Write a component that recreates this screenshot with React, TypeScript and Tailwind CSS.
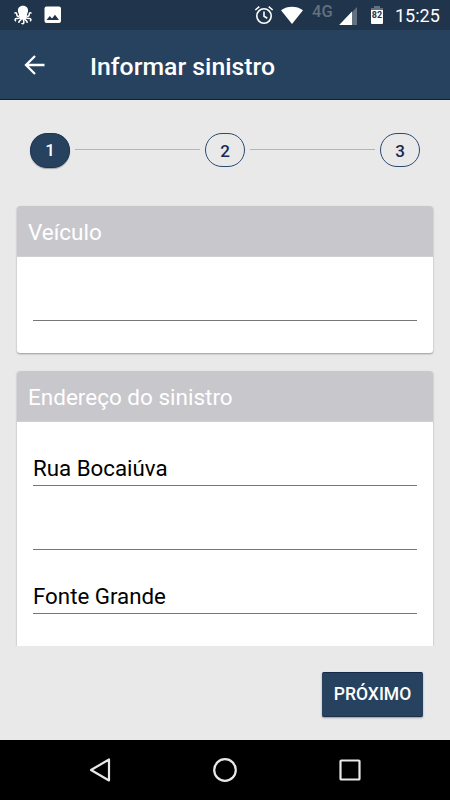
import { Fragment, type ReactNode } from 'react';
import clsx from 'clsx';

const steps = [1, 2, 3];
const currentStep = 1;

const address = [
  { id: 'street', value: 'Rua Bocaiúva' },
  { id: 'number', value: '' },
  { id: 'district', value: 'Fonte Grande' },
  { id: 'city', value: '' },
];

function StatusBar() {
  return (
    <div className="h-[30px] shrink-0 bg-[#20344c] text-white flex items-center pl-[14px] pr-[10px]">
      {/* Octopus notification */}
      <svg width="18" height="20" viewBox="0 0 18 20" className="shrink-0">
        <path
          d="M9 .8C5.500 .8 3.900 3.200 3.900 5.700C3.900 7.500 5 8.600 5.300 10.500L6 14H12L12.700 10.500C13 8.600 14.100 7.500 14.100 5.700C14.100 3.200 12.500 .8 9 .8Z"
          fill="currentColor"
        />
        <g fill="none" stroke="currentColor" strokeWidth="1.600" strokeLinecap="round">
          <path d="M6 10.500C4.500 12 2.800 11.500 2.800 9.500C2.800 8 1.800 7.300 1 8" />
          <path d="M12 10.500C13.500 12 15.200 11.500 15.200 9.500C15.200 8 16.200 7.300 17 8" />
          <path d="M6.800 12C5 14.200 3.500 13.300 2.200 13.500C1 13.700 .8 15 1.500 15.700" />
          <path d="M11.200 12C13 14.200 14.500 13.300 15.800 13.500C17 13.700 17.200 15 16.500 15.700" />
          <path d="M7.800 13C7.300 15.500 5 15.300 4.800 17.300" />
          <path d="M10.200 13C10.700 15.500 13 15.300 13.200 17.300" />
          <path d="M9 13C8.800 15 10.800 16.500 9.600 18.300C9.200 18.900 8.500 18.900 8 18.500" />
        </g>
      </svg>
      {/* Picture notification */}
      <svg width="18" height="18" viewBox="0 0 18 18" className="ml-[12px] shrink-0">
        <path
          fillRule="evenodd"
          d="M2.500 .5H15Q17 .5 17 2.500V15Q17 17 15 17H2.500Q.5 17 .5 15V2.500Q.5 .5 2.500 .5ZM2.500 14H15L11 8.800L8 12.500L5.800 10Z"
          fill="currentColor"
        />
      </svg>

      <div className="ml-auto flex items-center">
        <svg width="20" height="20" viewBox="0 0 20 20" fill="none" stroke="currentColor" strokeWidth="1.600">
          <circle cx="10" cy="11" r="7.200" />
          <path d="M10 6.500V11.300L13.300 13.300" />
          <path d="M1.300 5L5.300 1.600M18.700 5L14.700 1.600" />
        </svg>
        <svg width="24" height="20" viewBox="0 0 24 20" className="ml-[6px]">
          <path d="M1 5.200C7.500 .6 16.500 .6 23 5.200L12 19Z" fill="currentColor" />
        </svg>
        <span className="ml-[8px] w-[22px] font-medium text-[16.500px] leading-none text-[#62717f] relative -top-[3px]">4G</span>
        <svg width="19" height="18" viewBox="0 0 19 18" className="ml-[5px] mr-px relative top-px">
          <path d="M18 0V18H.5Z" fill="#62717f" />
          <path d="M13 4.500V18H.2Z" fill="currentColor" />
        </svg>
        <div className="ml-[12px] w-[12px] h-[18px]">
          <div className="mx-auto w-[6px] h-[2px] bg-[#62717f]" />
          <div className="h-[2px] bg-[#62717f]" />
          <div className="h-[14px] rounded-b-[1px] bg-white text-[#20344c] text-[9px] leading-[11px] font-bold text-center">82</div>
        </div>
        <span className="ml-[12px] w-[45px] pt-[2px] text-[18px] leading-none whitespace-nowrap">15:25</span>
      </div>
    </div>
  );
}

function Stepper() {
  return (
    <div className="h-[34px] mt-[33px] mx-[30px] flex shrink-0">
      {steps.map((step, i) => (
        <Fragment key={step}>
          {i > 0 && <div className="flex-1 h-px mt-[16px] mx-[5px] bg-[#b1b7b6]" />}
          <div
            className={clsx(
              'w-[40px] rounded-[17px] border flex items-center justify-center text-[17px] leading-none font-medium',
              step === currentStep
                ? 'h-[35px] bg-[#27425f] border-[#1c3554] text-white shadow-[0_1px_1px_rgba(0,0,0,0.3)]'
                : 'h-[34px] pt-[2px] border-[#2b4a70] text-[#172a50]'
            )}
          >
            {step}
          </div>
        </Fragment>
      ))}
    </div>
  );
}

function Card({ title, children }: { title: string; children: ReactNode }) {
  return (
    <section className="rounded-[3px] bg-white overflow-hidden shadow-[0_1px_2px_rgba(0,0,0,0.35)] shrink-0">
      <h2 className="h-[51px] pl-[11px] pt-[4px] flex items-center bg-[#c8c7cc] border-b border-[#d0cfd3] text-white text-[22.5px]">{title}</h2>
      <div className="px-4 pb-8">{children}</div>
    </section>
  );
}

function Field({ value }: { value: string }) {
  return (
    <div className="h-[64px] pb-[4px] flex items-end border-b border-[#777] text-[22.3px] leading-[26px] text-black">
      {value}
    </div>
  );
}

export default function App() {
  return (
    <div className="w-[450px] h-[800px] flex flex-col overflow-hidden bg-[#e9e9e9] font-[Roboto,sans-serif]">
      <StatusBar />

      <header className="h-[70px] shrink-0 bg-[#27425f] border-b border-[#10203c] text-white flex items-center">
        <svg width="22" height="20" viewBox="0 0 22 20" fill="none" stroke="currentColor" strokeWidth="2.300" className="ml-[24px]">
          <path d="M11 1L2 10L11 19M2 10H20.500" />
        </svg>
        <h1 className="ml-[44px] pt-[5px] text-[24.8px] leading-none font-medium">Informar sinistro</h1>
      </header>

      <Stepper />

      {/* Scrollable form */}
      <main className="mt-[34px] h-[445px] shrink-0 overflow-hidden px-[17px] pt-[5px] flex flex-col gap-[18px]">
        <Card title="Veículo">
          <Field value="" />
        </Card>
        <Card title="Endereço do sinistro">
          {address.map(field => (
            <Field key={field.id} value={field.value} />
          ))}
        </Card>
      </main>

      <footer className="flex-1 flex justify-end pt-[26px] pr-[27px]">
        <button className="w-[101px] h-[45px] rounded-[2px] bg-[#27425f] border-y border-t-[#14284b] border-b-[#1a304b] text-white text-[17.5px] font-medium shadow-[0_1px_2px_rgba(0,0,0,0.35)]">
          PRÓXIMO
        </button>
      </footer>

      <nav className="h-[60px] shrink-0 bg-black flex items-center justify-between px-[88px] text-[#e8e8e8]">
        <svg width="24" height="24" viewBox="0 0 24 24" fill="none" stroke="currentColor" strokeWidth="2.200" strokeLinejoin="round">
          <path d="M21 1.500V22.500L3 12Z" />
        </svg>
        <svg width="24" height="24" viewBox="0 0 24 24" fill="none" stroke="currentColor" strokeWidth="2.200">
          <circle cx="12" cy="12" r="10.800" />
        </svg>
        <svg width="24" height="24" viewBox="0 0 24 24" fill="none" stroke="currentColor" strokeWidth="2.200">
          <rect x="2.500" y="2.500" width="19" height="19" rx=".8" />
        </svg>
      </nav>
    </div>
  );
}
